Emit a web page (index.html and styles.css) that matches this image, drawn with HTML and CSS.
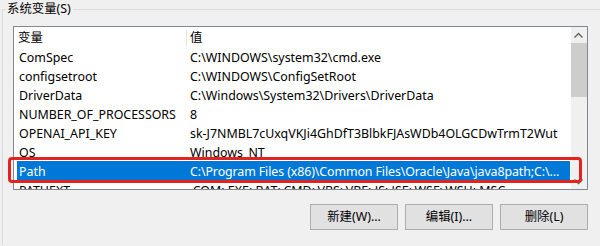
FILE: index.html
```html
<!DOCTYPE html>
<html lang="zh-CN">
<head>
<meta charset="utf-8">
<link rel="stylesheet" href="styles.css">
</head>
<body>
<fieldset class="group">
  <legend class="group-title">系统变量(S)</legend>
  <div class="list">
    <div class="list-body">
      <div class="list-header">
        <div class="hcell hcol1">变量</div>
        <div class="hdiv"></div>
        <div class="hcell hcol2">值</div>
      </div>
      <div class="row"><span class="c1">ComSpec</span><span class="c2">C:\WINDOWS\system32\cmd.exe</span></div>
      <div class="row"><span class="c1">configsetroot</span><span class="c2">C:\WINDOWS\ConfigSetRoot</span></div>
      <div class="row"><span class="c1">DriverData</span><span class="c2">C:\Windows\System32\Drivers\DriverData</span></div>
      <div class="row"><span class="c1">NUMBER_OF_PROCESSORS</span><span class="c2">8</span></div>
      <div class="row"><span class="c1">OPENAI_API_KEY</span><span class="c2">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</span></div>
      <div class="row"><span class="c1">OS</span><span class="c2">Windows_NT</span></div>
      <div class="row sel"><span class="c1">Path</span><span class="c2 path">C:\Program Files (x86)\Common Files\Oracle\Java\java8path;C:\...</span></div>
      <div class="row"><span class="c1">PATHEXT</span><span class="c2">.COM;.EXE;.BAT;.CMD;.VBS;.VBE;.JS;.JSE;.WSF;.WSH;.MSC</span></div>
    </div>
    <div class="scrollbar">
      <div class="sb-btn"><svg width="16" height="16" viewBox="0 0 16 16"><polyline points="3.5,10.5 7.5,6.5 11.5,10.5" fill="none" stroke="#606060" stroke-width="1.4"/></svg></div>
      <div class="sb-thumb"></div>
      <div class="sb-track"></div>
      <div class="sb-btn"><svg width="16" height="16" viewBox="0 0 16 16"><polyline points="3.5,6.5 7.5,10.5 11.5,6.5" fill="none" stroke="#606060" stroke-width="1.4"/></svg></div>
    </div>
    <div class="highlight"></div>
  </div>
  <div class="buttons">
    <button class="btn">新建(W)...</button>
    <button class="btn">编辑(I)...</button>
    <button class="btn">删除(L)</button>
  </div>
</fieldset>
</body>
</html>
```

FILE: styles.css
```css
html, body {
  margin: 0;
  height: 246px;
  overflow: hidden;
  background: #f0f0f0;
}
body {
  font-family: "Noto Sans", "Noto Sans CJK SC", sans-serif;
  font-size: 12.4px;
  color: #000;
}
.group {
  margin: 0 0 0 2px;
  padding: 0 0 15px 2px;
  border: 1px solid #dcdcdc;
  border-right: 0;
  border-bottom: 0;
}
.group-title {
  padding: 0 2px;
  margin: 0;
  line-height: 18px;
}
.list {
  position: relative;
  margin: 8px 0 0 8px;
  width: 575px;
  height: 164px;
  box-sizing: border-box;
  border: 1px solid #828790;
  background: #fff;
  display: flex;
}
.list-body {
  flex: 1;
  min-width: 0;
  display: flex;
  flex-direction: column;
  overflow: hidden;
}
.list-header {
  flex: none;
  height: 20px;
  line-height: 22px;
  display: flex;
}
.hcell {
  white-space: nowrap;
}
.hcol1 {
  width: 172px;
  padding-left: 4px;
  box-sizing: border-box;
}
.hdiv {
  width: 1px;
  margin-top: 3px;
  background: #e5e5e5;
}
.hcol2 {
  padding-left: 3px;
}
.row {
  flex: none;
  height: 19px;
  line-height: 21px;
  display: flex;
  margin: 0 1px 0 3px;
  white-space: nowrap;
  overflow: hidden;
}
.c1 {
  flex: none;
  width: 169px;
  padding-left: 2px;
  box-sizing: border-box;
  overflow: hidden;
}
.c2 {
  flex: 1;
  padding-left: 4px;
  overflow: hidden;
}
.c2.path {
  letter-spacing: -0.1px;
}
.row.sel {
  background: #0078d7;
  color: #fff;
}
.scrollbar {
  flex: none;
  width: 16px;
  background: #f0f0f0;
  display: flex;
  flex-direction: column;
}
.sb-btn {
  flex: none;
  height: 16px;
}
.sb-btn svg {
  display: block;
}
.sb-thumb {
  flex: none;
  height: 54px;
  background: #cdcdcd;
}
.sb-track {
  flex: 1;
}
.highlight {
  position: absolute;
  left: -6px;
  top: 130px;
  width: 574px;
  height: 26px;
  box-sizing: border-box;
  border: 3px solid #e5231e;
  border-radius: 4px;
  pointer-events: none;
}
.buttons {
  display: flex;
  justify-content: flex-end;
  gap: 7px;
  width: 575px;
  margin: 14px 0 0 8px;
}
.btn {
  width: 88px;
  height: 26px;
  box-sizing: border-box;
  border: 1px solid #adadad;
  border-radius: 0;
  background: #e1e1e1;
  padding: 0;
  font: inherit;
  color: #000;
  line-height: 24px;
  text-align: center;
}
```
